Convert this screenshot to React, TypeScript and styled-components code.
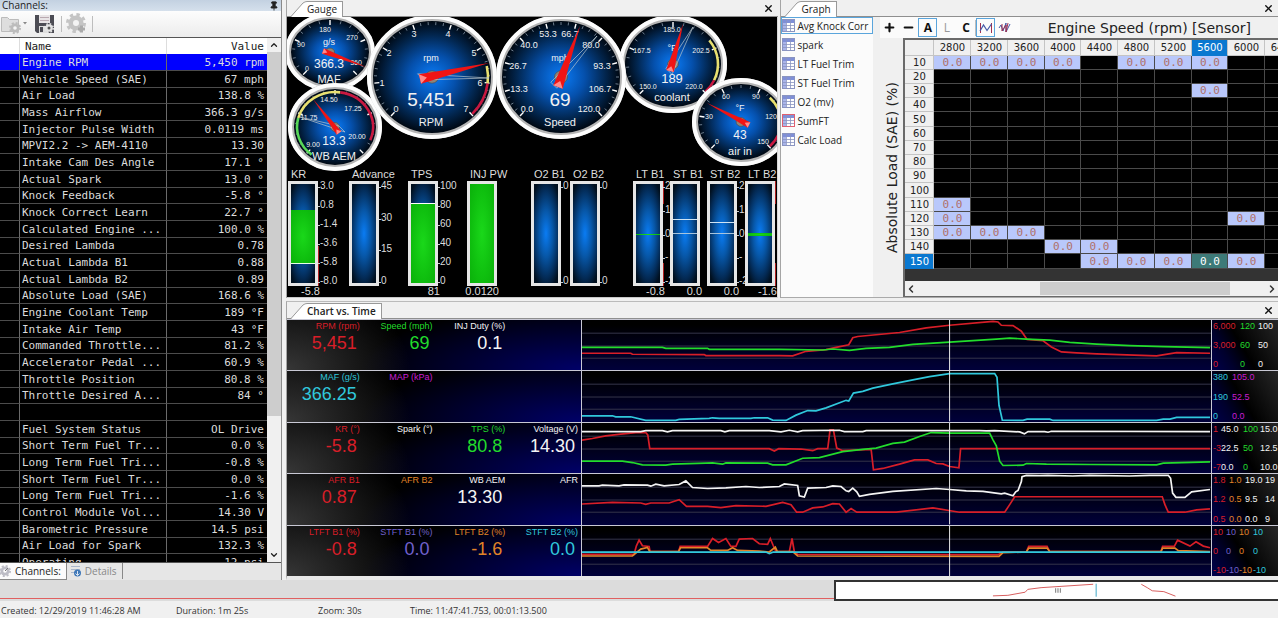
import React from 'react';
import styled, { createGlobalStyle } from 'styled-components';
import { X, Pin, ChevronUp, ChevronDown, ChevronLeft, ChevronRight, Plus, Minus } from 'lucide-react';

const UI = `'Open Sans', 'Noto Sans', sans-serif`;
const SANS = `'Liberation Sans', Arial, sans-serif`;
const MONO = `'DejaVu Sans Mono', monospace`;
const WIDE = `'DejaVu Sans', Verdana, sans-serif`;

const GlobalStyle = createGlobalStyle`
  *, *::before, *::after { box-sizing: border-box; }
  body { margin: 0; background: #f0f0f0; font: 10px/14px ${UI}; color: #222; }
  button { font: inherit; color: inherit; padding: 0; margin: 0; border: 0; background: none; }
`;

const Page = styled.div`
  display: flex;
  flex-direction: column;
  height: 100vh;
  min-height: 610px;
  overflow: hidden;
`;

const Workspace = styled.main`
  flex: 1;
  min-height: 0;
  display: grid;
  grid-template-columns: 282px minmax(0, 1fr);
  column-gap: 4px;
`;

/* ---------- channels ---------- */

const Sidebar = styled.aside`
  display: flex;
  flex-direction: column;
  min-height: 0;
  border-right: 1px solid #8a8a8a;
`;

const SidebarTitle = styled.header`
  display: flex;
  justify-content: space-between;
  align-items: center;
  height: 11px;
  padding: 0 2px;
  background: linear-gradient(#c3d1e1, #d5e0ec);
  h2 { margin: 0; font: inherit; line-height: 11px; }
`;

const IconBar = styled.div`
  display: flex;
  align-items: center;
  height: 26px;
  padding: 0 1px;
  background: linear-gradient(#fdfdfd, #ececec);
`;

const IconButton = styled.button<{ $gap?: number }>`
  display: flex;
  align-items: center;
  margin-right: ${(p) => p.$gap ?? 0}px;
`;

const Divider = styled.span`
  width: 1px;
  height: 16px;
  background: #bdbdbd;
`;

const ChannelArea = styled.div`
  flex: 1;
  min-height: 0;
  display: flex;
  border-top: 1px solid #555;
  border-bottom: 1px solid #555;
  background: #000;
`;

const ChannelScroll = styled.div`
  flex: 1;
  min-width: 0;
  overflow: hidden;
`;

const ChannelTable = styled.table`
  width: 100%;
  table-layout: fixed;
  border-collapse: separate;
  border-spacing: 0;
  font: 11px/15px ${MONO};
  color: #dcdcdc;
  th, td { padding: 0; font-weight: normal; white-space: pre; overflow: hidden; text-align: left; }
  th { height: 16px; background: #fff; color: #222; border-right: 1px solid #ddd; }
  td { height: 17px; border-right: 1px solid #6a6a6a; border-bottom: 1px solid #4c4c4c; }
  tr:nth-child(3n) td { height: 16px; }
  th:nth-child(2) { padding-left: 5px; }
  td:nth-child(2) { padding-left: 2px; }
  th:last-child, td:last-child { text-align: right; padding-right: 3px; border-right: 0; }
  col:first-child { width: 20px; }
  col:nth-child(2) { width: 147px; }
`;

const ChannelRow = styled.tr<{ $active?: boolean }>`
  background: ${(p) => (p.$active ? '#0000ff' : '#000')};
`;

const VScroll = styled.div`
  width: 14px;
  display: flex;
  flex-direction: column;
  align-items: center;
  background: #f0f0f0;
  svg { flex: none; margin: 2px 0; }
`;

const VThumb = styled.div`
  width: 100%;
  flex: 0 1 364px;
  margin-bottom: auto;
  background: #cdcdcd;
`;

const SideTabs = styled.nav`
  display: flex;
  height: 17px;
  background: #e6e6e6;
`;

const SideTab = styled.button<{ $active?: boolean }>`
  display: flex;
  align-items: center;
  gap: 4px;
  padding: 0 5px 0 0;
  background: ${(p) => (p.$active ? '#fbfbfb' : 'transparent')};
  color: ${(p) => (p.$active ? '#222' : '#888')};
  border-right: 1px solid #888;
  border-bottom: ${(p) => (p.$active ? '1px solid #888' : '0')};
  & + & { padding-left: 4px; height: 16px; }
`;

/* ---------- panels ---------- */

const Stage = styled.div`
  display: flex;
  flex-direction: column;
  min-width: 0;
  min-height: 0;
`;

const TopRow = styled.div`
  display: grid;
  grid-template-columns: minmax(0, 492fr) minmax(0, 497fr);
  column-gap: 2px;
  height: 298px;
`;

const Panel = styled.section`
  display: flex;
  flex-direction: column;
  min-width: 0;
  border-left: 1px solid #a5a5a5;
`;

const TabBar = styled.header`
  display: flex;
  justify-content: space-between;
  align-items: flex-end;
  height: 17px;
  padding: 0 4px;
  border-bottom: 1px solid #8f8f8f;
  background: #f0f0f0;
`;

const TabButton = styled.button<{ $bold?: boolean }>`
  display: flex;
  height: 16px;
  margin-bottom: -1px;
  font-weight: ${(p) => (p.$bold ? 600 : 400)};
  line-height: 14px;
  svg { flex: none; }
  span {
    padding: 0 5px 1px 0;
    background: #fff;
    border-top: 1px solid #999;
    border-right: 1px solid #999;
  }
`;

const CloseButton = styled.button`
  display: flex;
  height: 16px;
  align-items: center;
  color: #111;
`;

function PanelTab({ title, bold }: { title: string; bold?: boolean }) {
  return (
    <TabBar>
      <TabButton $bold={bold}>
        <svg width="16" height="16" viewBox="0 0 16 16">
          <path d="M0 16 L12 2 Q14 0 16 0 V16 Z" fill="#fff" />
          <path d="M0 15.5 L12 2 Q14 .5 16 .5" fill="none" stroke="#999" />
        </svg>
        <span>{title}</span>
      </TabButton>
      <CloseButton aria-label={`Close ${title}`}>
        <X size={11} strokeWidth={3} />
      </CloseButton>
    </TabBar>
  );
}

/* ---------- dials ---------- */

type Pt = [number, number];
interface DialSpec {
  x: number; y: number; rx: number; ry: number;
  majors: number; minors: number;
  labels: [string, number, number][];
  labelSize: number;
  unit?: [string, number];
  value: [string, number, number];
  name: [string, number];
  tip: Pt; tail: Pt; half: number;
  ghost?: Pt;
  zones?: [string, number, number][];
}

const dials: DialSpec[] = [
  {
    x: 43, y: 35, rx: 45, ry: 39, majors: 4, minors: 4, labelSize: 7,
    labels: [['0', -23, 16], ['90', -29, -8], ['180', -5, -23], ['270', 22, -15], ['360', 26, 10]],
    unit: ['g/s', -10], value: ['366.3', 12, 12], name: ['MAF', 27],
    tip: [36, 15], tail: [-7, -1], half: 3,
  },
  {
    x: 48, y: 110, rx: 47, ry: 44, majors: 4, minors: 4, labelSize: 7,
    labels: [['9.00', -22, 17], ['11.75', -26, -10], ['14.50', -6, -28], ['17.25', 18, -19], ['20.00', 22, 9]],
    value: ['13.3', 14, 12], name: ['WB AEM', 29],
    tip: [-22, -28], tail: [4, 6], half: 3, ghost: [-35, -10],
    zones: [['#58d858', -142, -75], ['#e8e070', -75, 8], ['#c81840', 8, 112]],
  },
  {
    x: 386, y: 47, rx: 54, ry: 49, majors: 4, minors: 5, labelSize: 7,
    labels: [['150.0', -25, 22], ['167.5', -31, -14], ['185.0', -1, -35], ['202.5', 28, -14], ['220.0', 21, 22]],
    unit: ['°F', -16], value: ['189', 14, 13], name: ['coolant', 33],
    tip: [10, -40], tail: [-3, 7], half: 4, ghost: [20, -37],
    zones: [['#e8e070', 54, 114], ['#c81840', 114, 134]],
  },
  {
    x: 145, y: 60, rx: 65, ry: 62, majors: 7, minors: 5, labelSize: 9,
    labels: [['0', -36, 32], ['1', -50, 6], ['2', -43, -24], ['3', -18, -43], ['4', 16, -43], ['5', 42, -24], ['6', 48, 6], ['7', 34, 32]],
    unit: ['rpm', -19], value: ['5,451', 22, 19], name: ['RPM', 45],
    tip: [57, -14], tail: [-12, 2], half: 5, ghost: [57, 1],
    zones: [['#e8e070', 78, 97], ['#c81840', 97, 134]],
  },
  {
    x: 274, y: 60, rx: 65, ry: 62, majors: 9, minors: 4, labelSize: 9,
    labels: [['0.0', -34, 32], ['13.3', -42, 12], ['26.7', -43, -11], ['40.0', -32, -32], ['53.3', -13, -43], ['66.7', 9, -43], ['80.0', 30, -32], ['93.3', 41, -11], ['106.7', 39, 12], ['120.0', 28, 32]],
    unit: ['mph', -19], value: ['69', 22, 19], name: ['Speed', 45],
    tip: [19, -51], tail: [-3, 10], half: 5, ghost: [36, -41],
  },
  {
    x: 454, y: 105, rx: 49, ry: 44, majors: 5, minors: 4, labelSize: 7,
    labels: [['0', -24, 19], ['30', -32, -6], ['60', -15, -26], ['90', 15, -26], ['120', 30, -6], ['150', 22, 19]],
    unit: ['°F', -14], value: ['43', 13, 12], name: ['air in', 29],
    tip: [-34, -19], tail: [8, 3], half: 3,
    zones: [['#e8e070', 46, 100], ['#c81840', 100, 134]],
  },
];

const DialField = styled.svg`
  display: block;
  width: 100%;
  height: 151px;
  overflow: visible;
  font-family: ${SANS};
  text { fill: #f2f2f2; text-anchor: middle; dominant-baseline: central; }
`;

const polar = (deg: number, rx: number, ry: number): Pt => {
  const a = (deg * Math.PI) / 180;
  return [Math.sin(a) * rx, -Math.cos(a) * ry];
};

function Dial({ d }: { d: DialSpec }) {
  const ix = d.rx - 6;
  const iy = d.ry - 6;
  const count = d.majors * d.minors;
  const dx = d.tip[0] - d.tail[0];
  const dy = d.tip[1] - d.tail[1];
  const len = Math.hypot(dx, dy);
  const nx = (-dy / len) * d.half;
  const ny = (dx / len) * d.half;
  const a: Pt = [d.tail[0] + nx, d.tail[1] + ny];
  const b: Pt = [d.tail[0] - nx, d.tail[1] - ny];
  return (
    <g transform={`translate(${d.x} ${d.y})`}>
      <ellipse rx={d.rx} ry={d.ry} fill="#b4b4b4" />
      <ellipse rx={d.rx - 2} ry={d.ry - 2} fill="none" stroke="#fdfdfd" strokeWidth="4" />
      <ellipse rx={ix} ry={iy} fill="url(#dialFace)" />
      {Array.from({ length: count + 1 }, (_, i) => {
        const deg = -135 + (270 * i) / count;
        const major = i % d.minors === 0;
        const inset = major ? 6 : 4;
        const [x1, y1] = polar(deg, ix - 1, iy - 1);
        const [x2, y2] = polar(deg, ix - inset, iy - inset);
        return <line key={i} x1={x1} y1={y1} x2={x2} y2={y2} stroke={major ? '#fff' : '#9ab'} strokeWidth={major ? 1.4 : 0.7} />;
      })}
      {d.zones?.map(([color, from, to]) => {
        const [x1, y1] = polar(from, ix - 3, iy - 3);
        const [x2, y2] = polar(to, ix - 3, iy - 3);
        return <path key={color} d={`M${x1} ${y1} A${ix - 3} ${iy - 3} 0 0 1 ${x2} ${y2}`} fill="none" stroke={color} strokeWidth="2.6" />;
      })}
      {d.labels.map(([t, x, y]) => (
        <text key={t} x={x} y={y} fontSize={d.labelSize}>{t}</text>
      ))}
      {d.unit && <text x="-1" y={d.unit[1]} fontSize="9">{d.unit[0]}</text>}
      <ellipse rx={d.rx / 10} ry={d.ry / 10} fill="#8d8578" stroke="#444" strokeWidth=".6" />
      {d.ghost && (
        <path d={`M${-d.ghost[0] * 0.2 + 3} ${-d.ghost[1] * 0.2 + 3} L${d.ghost[0]} ${d.ghost[1]} L${-d.ghost[0] * 0.2 - 3} ${-d.ghost[1] * 0.2 - 3} Z`} fill="none" stroke="#b8c4cc" strokeWidth=".7" />
      )}
      <polygon points={`${a} ${b} ${d.tip}`} fill="#f01414" />
      <polygon points={`${a} ${b} ${d.tail[0] + dx * 0.1},${d.tail[1] + dy * 0.1}`} fill="#ff8a8a" />
      <text x="-1" y={d.value[1]} fontSize={d.value[2]}>{d.value[0]}</text>
      <text x="-1" y={d.name[1]} fontSize="11">{d.name[0]}</text>
    </g>
  );
}

/* ---------- bar gauges ---------- */

const GaugeCanvas = styled.div`
  flex: 1;
  min-height: 0;
  overflow: hidden;
  background: #000;
  border-bottom: 1px solid #c8c8c8;
  border-right: 1px solid #d8d8d8;
`;

const BarGrid = styled.div`
  display: grid;
  grid-template-columns: 61px 59px 59px 64px 39px 63px 37px 37px 38px 1fr;
  padding-left: 1px;
  position: relative;
  font: 11px/13px ${SANS};
  color: #ddd;
`;

const BarTitle = styled.div`
  height: 13px;
  padding-left: 3px;
  white-space: nowrap;
`;

const BarBody = styled.div`
  display: flex;
  height: 105px;
`;

const BarTube = styled.div`
  flex: none;
  position: relative;
  width: 30px;
  border: 3px solid #e6e6e6;
  background: radial-gradient(ellipse 70% 58% at center, #0a7cf4 0%, #0757a8 40%, #032a55 78%, #01101f 100%);
`;

const Fill = styled.div`
  position: absolute;
  left: 0;
  right: 0;
  background: radial-gradient(ellipse at center, #1ad81a, #0fc00f 60%, #0ab00a);
`;

const Mark = styled.div`
  position: absolute;
  left: 0;
  right: 0;
  height: 1px;
`;

const Scale = styled.div`
  display: flex;
  flex-direction: column;
  justify-content: space-between;
  width: 0;
  font-size: 10px;
  line-height: 10px;
  white-space: nowrap;
  span { padding-left: 3px; }
  span::before {
    content: '';
    display: inline-block;
    width: 2px;
    height: 1px;
    margin: 0 0 1px -3px;
    background: #ccc;
  }
`;

const AlarmStrip = styled.i<{ $full?: boolean }>`
  flex: none;
  width: 1px;
  margin-right: -1px;
  background: ${(p) =>
    p.$full
      ? 'linear-gradient(transparent 62%, #b02020 62%)'
      : 'linear-gradient(#b02020 0 22%, transparent 22% 78%, #b02020 78%)'};
`;

const BarValue = styled.div`
  display: flex;
  justify-content: flex-end;
  width: 32px;
  height: 11px;
  line-height: 11px;
`;

interface BarSpec {
  title: string; scale: string[]; value?: string;
  fill?: [number, number]; marks?: [string, number][]; alarm?: 'low' | 'both';
}

const bars: BarSpec[] = [
  { title: 'KR', scale: ['3.0', '0.8', '-1.4', '-3.6', '-5.8', '-8.0'], value: '-5.8', fill: [26, 80], marks: [['#e8ffe8', 80]], alarm: 'low' },
  { title: 'Advance', scale: ['45', '30', '15', '0'] },
  { title: 'TPS', scale: ['100', '80', '60', '40', '20', '0'], value: '81', fill: [20, 100], marks: [['#fff', 19]] },
  { title: 'INJ PW', scale: [], value: '0.0120', fill: [0, 100] },
  { title: 'O2 B1', scale: ['0', '0'] },
  { title: 'O2 B2', scale: ['0', '0'] },
  { title: 'LT B1', scale: ['2', '1', '0', '-', '-2'], value: '-0.8', fill: [50, 52], alarm: 'both' },
  { title: 'ST B1', scale: [], value: '0.0', marks: [['#cfe4f4', 35], ['#a8c4dc', 49]] },
  { title: 'ST B2', scale: ['2', '1', '0', '-', '-2'], value: '0.0', marks: [['#cfe4f4', 38], ['#a8c4dc', 49]] },
  { title: 'LT B2', scale: [], value: '-1.6', fill: [49, 53], alarm: 'both' },
];

function BarGauge({ bar }: { bar: BarSpec }) {
  return (
    <div>
      <BarTitle>{bar.title}</BarTitle>
      <BarBody>
        <BarTube>
          {bar.fill && <Fill style={{ top: `${bar.fill[0]}%`, height: `${bar.fill[1] - bar.fill[0]}%` }} />}
          {bar.marks?.map(([color, at]) => (
            <Mark key={at} style={{ top: `${at}%`, background: color }} />
          ))}
        </BarTube>
        {bar.alarm && <AlarmStrip $full={bar.alarm === 'low'} />}
        <Scale>
          {bar.scale.map((s, i) => (
            <span key={i}>{s}</span>
          ))}
        </Scale>
      </BarBody>
      <BarValue>{bar.value}</BarValue>
    </div>
  );
}

/* ---------- graph ---------- */

const GraphBody = styled.div`
  flex: 1;
  min-height: 0;
  display: flex;
  border-bottom: 1px solid #aaa;
`;

const GraphList = styled.nav`
  display: flex;
  flex-direction: column;
  gap: 2px;
  width: 92px;
  background: #fbfbfb;
`;

const GraphItem = styled.button<{ $active?: boolean }>`
  display: flex;
  align-items: center;
  gap: 2px;
  height: 17px;
  padding-left: 1px;
  white-space: nowrap;
  outline: ${(p) => (p.$active ? '1px solid #5aa5dc' : 'none')};
  outline-offset: -1px;
  svg { flex: none; }
`;

const GraphMain = styled.div`
  flex: 1;
  min-width: 0;
  display: flex;
  flex-direction: column;
`;

const GraphTools = styled.div`
  display: flex;
  align-items: center;
  height: 21px;
  padding-left: 7px;
`;

const ToolStrip = styled.div`
  display: flex;
  align-items: center;
  height: 21px;
  padding-right: 6px;
  background: #fbfbfb;
`;

const Tool = styled.button<{ $on?: boolean; $faint?: boolean }>`
  display: flex;
  align-items: center;
  justify-content: center;
  width: 19px;
  height: 19px;
  border: 1px solid ${(p) => (p.$on ? '#5aa5dc' : 'transparent')};
  color: ${(p) => (p.$faint ? '#999' : '#111')};
  font: ${(p) => (p.$faint ? 400 : 700)} 12px/16px ${UI};
`;

const GraphTitle = styled.h3`
  flex: 1;
  margin: 0 27px 0 0;
  text-align: right;
  white-space: nowrap;
  font: 14px/20px ${WIDE};
`;

const GridArea = styled.div`
  flex: 1;
  min-height: 0;
  display: flex;
`;

const YLabel = styled.div`
  width: 30px;
  padding: 0 11px 0 3px;
  writing-mode: vertical-rl;
  transform: rotate(180deg);
  text-align: center;
  white-space: nowrap;
  font: 14px/16px ${WIDE};
`;

const GridBox = styled.div`
  flex: 1;
  min-width: 0;
  display: flex;
  flex-direction: column;
  border-top: 2px solid #6a6a6a;
  border-left: 2px solid #6a6a6a;
  border-bottom: 1px solid #6a6a6a;
  background: #333;
  overflow: hidden;
`;

const DataTable = styled.table`
  width: 397px;
  flex: none;
  table-layout: fixed;
  border-collapse: separate;
  border-spacing: 0;
  font: 10px/13px ${WIDE};
  th, td {
    padding: 0;
    height: 14px;
    font-weight: normal;
    text-align: center;
    border-right: 1px solid #4a4a4a;
    border-bottom: 1px solid #4a4a4a;
  }
  tbody tr:nth-child(5n) th, tbody tr:nth-child(5n) td { height: 15px; }
  thead th { height: 16px; }
  col { width: 37px; }
  col:nth-child(4n + 1) { width: 36px; }
  col:first-child { width: 29px; }
`;

const HeadCell = styled.th<{ $active?: boolean }>`
  background: ${(p) => (p.$active ? '#0a78d0' : '#f0f0f0')};
  color: ${(p) => (p.$active ? '#fff' : '#222')};
  && { border-color: #c4c4c4; border-bottom-color: ${(p) => (p.$active ? '#0a78d0' : '#c4c4c4')}; }
`;

const DataCell = styled.td<{ $kind?: 'hit' | 'current' }>`
  background: ${(p) => (p.$kind === 'hit' ? '#b9c8fb' : p.$kind === 'current' ? '#3d7a78' : '#000')};
  color: ${(p) => (p.$kind === 'current' ? '#fff' : '#b0706a')};
  font-family: ${MONO};
  font-size: 11px;
`;

const HScroll = styled.div`
  display: flex;
  align-items: center;
  height: 15px;
  margin-top: auto;
  background: #f0f0f0;
  color: #333;
  svg:last-child { margin-left: auto; }
`;

const HThumb = styled.div`
  width: 51%;
  height: 13px;
  margin-left: 33%;
  background: #cdcdcd;
`;

const columns = [2800, 3200, 3600, 4000, 4400, 4800, 5200, 5600, 6000, 6400];
const loads = [10, 20, 30, 40, 50, 60, 70, 80, 90, 100, 110, 120, 130, 140, 150];
const hits: Record<number, number[]> = {
  10: [2800, 3200, 3600, 4000, 4800, 5200, 5600],
  30: [5600],
  110: [2800],
  120: [2800, 6000],
  130: [2800, 3200, 3600],
  140: [4000, 4400],
  150: [4400, 4800, 5200, 5600, 6000],
};

const graphs = ['Avg Knock Corr', 'spark', 'LT Fuel Trim', 'ST Fuel Trim', 'O2 (mv)', 'SumFT', 'Calc Load'];

const TableGlyph = ({ alert }: { alert?: boolean }) => (
  <svg width="13" height="13" viewBox="0 0 13 13">
    <rect x=".5" y=".5" width="12" height="12" fill="#fff" stroke={alert ? '#e06070' : '#8a94c0'} />
    <rect x="1" y="1" width="11" height="3" fill="#7f8fd8" />
    <rect x="1" y="4" width="3" height="8" fill="#a9b4ea" />
    <path d="M1 6.5H12M1 9.5H12M4.5 1V12M8.5 1V12" stroke="#8a94c0" strokeWidth=".8" />
  </svg>
);

/* ---------- chart ---------- */

const ChartPanel = styled(Panel)`
  flex: 1;
  min-height: 0;
  margin-top: 3px;
  border-top: 1px solid #bbb;
  border-bottom: 4px solid #e8e8e8;
`;

const ChartRow = styled.div`
  flex: 1 1 0;
  min-height: 0;
  display: grid;
  grid-template-columns: 295px minmax(0, 1fr) 67px;
  border-top: 1px solid #c8c8d4;
  background: #000;
  overflow: hidden;
`;

const Readouts = styled.dl`
  display: grid;
  grid-template-columns: repeat(4, 1fr);
  margin: 0;
  padding: 0 3px 0 0;
  border-right: 1px solid #c8c8d4;
  font-family: ${SANS};
  background:
    radial-gradient(ellipse 42% 170% at 0 100%, #363636, transparent),
    radial-gradient(ellipse 75% 130% at 100% 100%, #000068, transparent),
    #000;
`;

const Readout = styled.div<{ $color: string }>`
  color: ${(p) => p.$color};
  text-align: right;
  white-space: nowrap;
  dt { font-size: 9px; line-height: 12px; }
  dd { margin: 0; padding-right: 3px; font-size: 18px; line-height: 22px; }
`;

const Plot = styled.svg`
  display: block;
  width: 100%;
  height: 100%;
  background: linear-gradient(#000 10%, #00003a);
  path, polyline { fill: none; vector-effect: non-scaling-stroke; }
`;

const Axis = styled.div<{ $cols: string }>`
  display: grid;
  grid-template-columns: ${(p) => p.$cols};
  padding-left: 1px;
  border-left: 1px solid #c8c8d4;
  font: 9px/12px ${SANS};
  white-space: nowrap;
  background: linear-gradient(60deg, #00004c 0%, #00002c 24%, #000 46%, #262626 100%);
`;

const AxisCol = styled.div<{ $color: string }>`
  display: flex;
  flex-direction: column;
  justify-content: space-between;
  min-width: 0;
  color: ${(p) => p.$color};
`;

const RED = '#d81e28';
const GREEN = '#22dc2c';
const WHITE = '#f4f4f4';
const CYAN = '#30c8dc';
const MAGENTA = '#c81ed0';
const ORANGE = '#e08428';
const VIOLET = '#7060cc';

interface ChartSpec {
  reads: [string, string, string][];
  lines: [string, string][];
  cols: string;
  axis: [string, string, string, string][];
}

const charts: ChartSpec[] = [
  {
    reads: [['RPM (rpm)', '5,451', RED], ['Speed (mph)', '69', GREEN], ['INJ Duty (%)', '0.1', WHITE]],
    lines: [
      [RED, '0,101 146,101 151,104 366,105 371,108 591,108 631,109 671,95 731,90 761,83 799,75 811,54 826,50 951,38 1031,24 1101,16 1231,4 1246,6 1256,16 1291,17 1316,34 1333,59 1381,63 1406,82 1436,97 1481,100 1541,103 1721,109 1781,99 1881,101'],
      [GREEN, '0,83 241,83 251,86 376,86 381,89 591,89 721,91 751,88 801,92 851,86 921,83 991,74 1101,67 1241,58 1281,55 1331,58 1401,61 1461,68 1541,73 1641,78 1741,81 1881,84'],
    ],
    cols: '27px 18px 1fr',
    axis: [[RED, '6,000', '3,000', '0'], [GREEN, '120', '60', '0'], [WHITE, '100', '50', '0']],
  },
  {
    reads: [['MAF (g/s)', '366.25', CYAN], ['MAP (kPa)', '', MAGENTA]],
    lines: [
      [CYAN, '0,136 91,136 101,139 146,139 191,150 281,150 291,147 381,144 391,142 411,144 506,144 516,142 556,142 571,149 611,150 641,134 676,120 701,121 731,112 791,89 799,91 813,67 841,62 871,52 931,39 991,27 1041,17 1101,8 1236,8 1243,19 1249,104 1259,149 1321,150 1333,146 1401,146 1411,150 1721,150 1741,146 1761,146 1781,141 1881,141'],
    ],
    cols: '19px 1fr',
    axis: [[CYAN, '380', '190', '0'], [MAGENTA, '105.0', '52.5', '0.0']],
  },
  {
    reads: [['KR (°)', '-5.8', RED], ['Spark (°)', '', WHITE], ['TPS (%)', '80.8', GREEN], ['Voltage (V)', '14.30', WHITE]],
    lines: [
      [RED, '0,52 31,47 71,39 116,34 161,29 191,29 197,36 203,78 561,78 576,85 589,78 656,79 691,84 706,78 736,78 743,21 753,21 763,76 781,84 866,80 873,142 901,138 951,125 996,112 1036,112 1061,123 1081,124 1101,132 1129,136 1134,78 1881,78'],
      [GREEN, '0,116 121,116 151,120 181,127 251,128 271,125 371,122 391,121 421,125 431,121 556,122 571,127 611,127 661,107 711,105 781,87 841,80 881,76 931,62 966,58 1011,41 1046,29 1101,31 1221,31 1231,51 1241,69 1251,116 1261,129 1321,128 1331,123 1391,125 1521,126 1721,127 1741,122 1881,118'],
      [WHITE, '0,26 176,26 191,23 241,23 256,27 271,23 416,23 428,27 441,23 561,23 596,27 621,22 646,27 661,23 771,22 786,26 841,26 851,23 1191,23 1211,24 1236,23 1311,27 1325,33 1336,26 1386,26 1396,28 1406,25 1881,26'],
    ],
    cols: '8px 22px 17px 1fr',
    axis: [[RED, '1', '-3', '-7'], [WHITE, '45.0', '22.5', '0.0'], [GREEN, '100', '50', '0'], [WHITE, '15.0', '12.5', '10.0']],
  },
  {
    reads: [['AFR B1', '0.87', RED], ['AFR B2', '', ORANGE], ['WB AEM', '13.30', WHITE], ['AFR', '', WHITE]],
    lines: [
      [RED, '0,91 91,86 176,88 191,92 206,88 261,88 291,78 313,98 376,98 416,102 461,96 551,98 601,86 626,93 643,116 661,116 691,103 721,100 751,90 771,91 791,116 806,105 823,116 941,116 1051,103 1131,116 1266,116 1281,93 1296,69 1738,69 1746,93 1756,116 1806,116 1841,109 1881,106'],
      [WHITE, '0,36 51,36 61,34 111,36 126,33 196,34 206,37 221,31 246,36 291,32 311,21 331,41 376,44 431,42 491,38 531,41 591,38 606,30 646,35 651,66 666,70 676,43 731,41 751,36 776,38 791,51 799,53 811,43 823,54 831,68 861,62 931,53 1061,44 1101,47 1151,51 1201,53 1256,60 1266,58 1291,66 1299,54 1306,50 1316,23 1318,8 1331,4 1370,5 1395,4 1470,6 1520,4 1640,6 1700,4 1756,4 1763,13 1769,58 1779,71 1806,71 1826,54 1881,47'],
    ],
    cols: '16px 16px 20px 1fr',
    axis: [[RED, '1.8', '1.2', '0.5'], [ORANGE, '1.0', '0.5', '0.0'], [WHITE, '19.0', '9.5', '0.0'], [WHITE, '19', '14', '9']],
  },
  {
    reads: [['LTFT B1 (%)', '-0.8', RED], ['STFT B1 (%)', '0.0', VIOLET], ['LTFT B2 (%)', '-1.6', ORANGE], ['STFT B2 (%)', '0.0', CYAN]],
    lines: [
      [RED, '0,86 156,86 163,60 171,43 181,60 201,62 204,78 289,78 294,62 376,62 391,38 409,50 431,38 446,62 461,62 471,40 511,38 531,54 556,56 564,38 573,60 581,78 621,78 629,38 636,78 646,86 1246,87 1261,79 1331,79 1338,62 1393,62 1401,78 1734,78 1739,62 1774,62 1784,43 1821,61 1839,48 1861,61 1881,66'],
      [ORANGE, '0,91 151,91 176,70 196,65 203,78 289,78 295,66 376,66 386,74 436,74 451,66 466,74 531,76 561,79 579,64 585,78 631,78 646,91 1249,92 1261,81 1331,79 1338,67 1393,67 1401,78 1734,78 1739,67 1776,67 1786,75 1881,78'],
      [CYAN, '0,79 551,79 561,84 573,79 1881,79'],
    ],
    cols: '13px 13px 14px 1fr',
    axis: [[RED, '10', '0', '-10'], [VIOLET, '10', '0', '-10'], [ORANGE, '10', '0', '-10'], [CYAN, '10', '0', '-10']],
  },
];

/* ---------- footer ---------- */

const Timeline = styled.div`
  display: grid;
  grid-template-columns: 834px minmax(0, 1fr);
  height: 21px;
  background: #dcdcdc;
`;

const Overview = styled.div`
  border-bottom: 1px solid #e06060;
  margin-bottom: 2px;
`;

const TimeWindow = styled.svg`
  display: block;
  width: 100%;
  height: 21px;
  background: #fff;
  border: 2px solid #333;
  border-right: 0;
  path { fill: none; vector-effect: non-scaling-stroke; }
`;

const StatusBar = styled.footer`
  display: grid;
  grid-template-columns: 175px 142px 92px 1fr;
  height: 17px;
  padding-left: 1px;
  line-height: 19px;
  font-size: 9px;
  color: #333;
`;

const channels: [string, string][] = [
  ['Engine RPM', '5,450 rpm'], ['Vehicle Speed (SAE)', '67 mph'], ['Air Load', '138.8 %'], ['Mass Airflow', '366.3 g/s'],
  ['Injector Pulse Width', '0.0119 ms'], ['MPVI2.2 -> AEM-4110', '13.30'], ['Intake Cam Des Angle', '17.1 °'], ['Actual Spark', '13.0 °'],
  ['Knock Feedback', '-5.8 °'], ['Knock Correct Learn', '22.7 °'], ['Calculated Engine ...', '100.0 %'], ['Desired Lambda', '0.78'],
  ['Actual Lambda B1', '0.88'], ['Actual Lambda B2', '0.89'], ['Absolute Load (SAE)', '168.6 %'], ['Engine Coolant Temp', '189 °F'],
  ['Intake Air Temp', '43 °F'], ['Commanded Throttle...', '81.2 %'], ['Accelerator Pedal ...', '60.9 %'], ['Throttle Position', '80.8 %'],
  ['Throttle Desired A...', '84 °'], ['', ''], ['Fuel System Status', 'OL Drive'], ['Short Term Fuel Tr...', '0.0 %'],
  ['Long Term Fuel Tri...', '-0.8 %'], ['Short Term Fuel Tr...', '0.0 %'], ['Long Term Fuel Tri...', '-1.6 %'], ['Control Module Vol...', '14.30 V'],
  ['Barometric Pressure', '14.5 psi'], ['Air Load for Spark', '132.3 %'], ['Operating...', '12 psi'],
];

const Cog = ({ x, y, r, color, hole = '#f4f4f4' }: { x: number; y: number; r: number; color: string; hole?: string }) => (
  <g transform={`translate(${x} ${y})`}>
    <circle r={r * 0.85} fill="none" stroke={color} strokeWidth={r * 0.3} strokeDasharray={`${r * 0.34} ${r * 0.33}`} />
    <circle r={r * 0.76} fill={color} />
    <circle r={r * 0.3} fill={hole} />
  </g>
);

export default function App() {
  return (
    <>
      <GlobalStyle />
      <Page>
        <Workspace>
          <Sidebar>
            <SidebarTitle>
              <h2>Channels:</h2>
              <Pin size={10} fill="#222" />
            </SidebarTitle>
            <IconBar>
              <IconButton $gap={8} aria-label="Open configuration">
                <svg width="26" height="22" viewBox="0 0 26 22">
                  <path d="M0.500 4.500h6l2 2h9v12h-17z" fill="#dedede" stroke="#bbb" />
                  <Cog x={14} y={15} r={6} color="#bcbcbc" />
                  <path d="M22 9h4l-2 2.500z" fill="#888" />
                </svg>
              </IconButton>
              <IconButton $gap={6} aria-label="Save configuration">
                <svg width="20" height="20" viewBox="0 0 20 20">
                  <path d="M0 1h19v18H2l-2-2z" fill="#4c4c54" />
                  <rect x="4" y="1" width="11" height="8" fill="#e8e4e6" />
                  <path d="M5 3.500h9M5 6.500h9" stroke="#b9a9b0" />
                  <rect x="4" y="12" width="9" height="7" fill="#ddd" />
                  <rect x="5" y="13" width="3" height="5" fill="#4c4c54" />
                  <Cog x={14} y={14} r={5} color="#e4e4e4" hole="#555" />
                </svg>
              </IconButton>
              <Divider />
              <IconButton $gap={5} aria-label="Add channel">
                <svg width="25" height="22" viewBox="0 0 25 22">
                  <Cog x={14} y={10} r={10} color="#c4c4c4" />
                  <path d="M16 16h7M19.500 12.500v7" stroke="#aaa" strokeWidth="3" />
                </svg>
              </IconButton>
              <Divider />
            </IconBar>
            <ChannelArea>
              <ChannelScroll>
                <ChannelTable>
                  <colgroup><col /><col /><col /></colgroup>
                  <thead>
                    <tr><th /><th>Name</th><th>Value</th></tr>
                  </thead>
                  <tbody>
                    {channels.map(([name, value], i) => (
                      <ChannelRow key={i} $active={i === 0}>
                        <td /><td>{name}</td><td>{value}</td>
                      </ChannelRow>
                    ))}
                  </tbody>
                </ChannelTable>
              </ChannelScroll>
              <VScroll>
                <ChevronUp size={10} strokeWidth={3} />
                <VThumb />
                <ChevronDown size={10} strokeWidth={3} />
              </VScroll>
            </ChannelArea>
            <SideTabs>
              <SideTab $active>
                <svg width="11" height="13" viewBox="0 0 11 13">
                  <Cog x={5} y={6} r={6} color="#bdbdc6" hole="#fff" />
                  <path d="M5 6L8 3" stroke="#777" />
                </svg>
                Channels:
              </SideTab>
              <SideTab>
                <svg width="10" height="12" viewBox="0 0 10 12">
                  <path d="M0 1.500h9M0 4.500h9M0 7.500h5" stroke="#a9b6cc" />
                  <circle cx="6.500" cy="8" r="3.500" fill="#3f78b8" />
                  <path d="M6.500 6v4M4.500 8.500l2 2 2-2" stroke="#fff" fill="none" strokeWidth=".8" />
                </svg>
                Details
              </SideTab>
            </SideTabs>
          </Sidebar>

          <Stage>
            <TopRow>
              <Panel>
                <PanelTab title="Gauge" />
                <GaugeCanvas>
                  <DialField>
                    <defs>
                      <radialGradient id="dialFace">
                        <stop offset="0" stopColor="#0a7cf8" />
                        <stop offset=".4" stopColor="#0550ac" />
                        <stop offset=".75" stopColor="#02264f" />
                        <stop offset="1" stopColor="#000812" />
                      </radialGradient>
                    </defs>
                    {dials.map((d) => <Dial key={d.name[0]} d={d} />)}
                  </DialField>
                  <BarGrid>
                    {bars.map((b) => <BarGauge key={b.title} bar={b} />)}
                  </BarGrid>
                </GaugeCanvas>
              </Panel>

              <Panel>
                <PanelTab title="Graph" />
                <GraphBody>
                  <GraphList>
                    {graphs.map((g, i) => (
                      <GraphItem key={g} $active={i === 0}>
                        <TableGlyph alert={g === 'SumFT'} />
                        {g}
                      </GraphItem>
                    ))}
                  </GraphList>
                  <GraphMain>
                    <GraphTools>
                      <ToolStrip>
                        <Tool aria-label="Zoom in"><Plus size={13} strokeWidth={4} /></Tool>
                        <Tool aria-label="Zoom out"><Minus size={13} strokeWidth={4} /></Tool>
                        <Tool $on>A</Tool>
                        <Tool $faint>L</Tool>
                        <Tool>C</Tool>
                        <Divider />
                        <Tool $on aria-label="Line view">
                          <svg width="14" height="12" viewBox="0 0 14 12" fill="none">
                            <path d="M1.500 1v10M12.500 1v10" stroke="#a03050" />
                            <path d="M1 9L4.500 3 8 8.500 12.500 2" stroke="#445aa8" strokeWidth="1.200" />
                          </svg>
                        </Tool>
                        <Tool aria-label="Overlay view">
                          <svg width="14" height="12" viewBox="0 0 14 12" fill="none">
                            <path d="M1 6l2-3 2 6 3-8v9l4-8" stroke="#445aa8" />
                            <path d="M4 2v7l4-6v7l2-9" stroke="#a03050" />
                          </svg>
                        </Tool>
                      </ToolStrip>
                      <GraphTitle>Engine Speed (rpm) [Sensor]</GraphTitle>
                    </GraphTools>
                    <GridArea>
                      <YLabel>Absolute Load (SAE) (%)</YLabel>
                      <GridBox>
                        <DataTable>
                          <colgroup>
                            <col />
                            {columns.map((c) => <col key={c} />)}
                          </colgroup>
                          <thead>
                            <tr>
                              <HeadCell />
                              {columns.map((c) => <HeadCell key={c} $active={c === 5600}>{c}</HeadCell>)}
                            </tr>
                          </thead>
                          <tbody>
                            {loads.map((l) => (
                              <tr key={l}>
                                <HeadCell $active={l === 150}>{l}</HeadCell>
                                {columns.map((c) => {
                                  const hit = hits[l]?.includes(c);
                                  const current = l === 150 && c === 5600;
                                  return (
                                    <DataCell key={c} $kind={current ? 'current' : hit ? 'hit' : undefined}>
                                      {hit ? '0.0' : ''}
                                    </DataCell>
                                  );
                                })}
                              </tr>
                            ))}
                          </tbody>
                        </DataTable>
                        <HScroll>
                          <ChevronLeft size={12} strokeWidth={3} />
                          <HThumb />
                          <ChevronRight size={12} strokeWidth={3} />
                        </HScroll>
                      </GridBox>
                    </GridArea>
                  </GraphMain>
                </GraphBody>
              </Panel>
            </TopRow>

            <ChartPanel>
              <PanelTab title="Chart vs. Time" bold />
              {charts.map((c, i) => (
                <ChartRow key={i}>
                  <Readouts>
                    {c.reads.map(([label, value, color]) => (
                      <Readout key={label} $color={color}>
                        <dt>{label}</dt>
                        <dd>{value}</dd>
                      </Readout>
                    ))}
                  </Readouts>
                  <Plot viewBox="0 0 1884 153" preserveAspectRatio="none">
                    <path d="M0 40H1884M0 79H1884M0 116H1884" stroke="#34344a" strokeWidth="1" />
                    {c.lines.map(([color, points], k) => (
                      <polyline key={k} points={points} stroke={color} strokeWidth="1.700" />
                    ))}
                    <path d="M1101 0V153" stroke="#e8e8e8" strokeWidth="1" />
                  </Plot>
                  <Axis $cols={c.cols}>
                    {c.axis.map(([color, ...ticks], k) => (
                      <AxisCol key={k} $color={color}>
                        {ticks.map((t, n) => <span key={n}>{t}</span>)}
                      </AxisCol>
                    ))}
                  </Axis>
                </ChartRow>
              ))}
            </ChartPanel>
          </Stage>
        </Workspace>

        <Timeline>
          <Overview />
          <TimeWindow viewBox="0 0 1332 60" preserveAspectRatio="none">
            <path d="M473 49L518 47 570 36 578 26 618 20 775 8M920 8L938 20 953 31 988 34 1023 50" stroke="#d86060" />
            <path d="M784 6V52" stroke="#40a8c8" />
            <path d="M662 22V38M669 22V38M676 22V38" stroke="#777" />
          </TimeWindow>
        </Timeline>
        <StatusBar>
          <span>Created: 12/29/2019 11:46:28 AM</span>
          <span>Duration: 1m 25s</span>
          <span>Zoom: 30s</span>
          <span>Time: 11:47:41.753, 00:01:13.500</span>
        </StatusBar>
      </Page>
    </>
  );
}
